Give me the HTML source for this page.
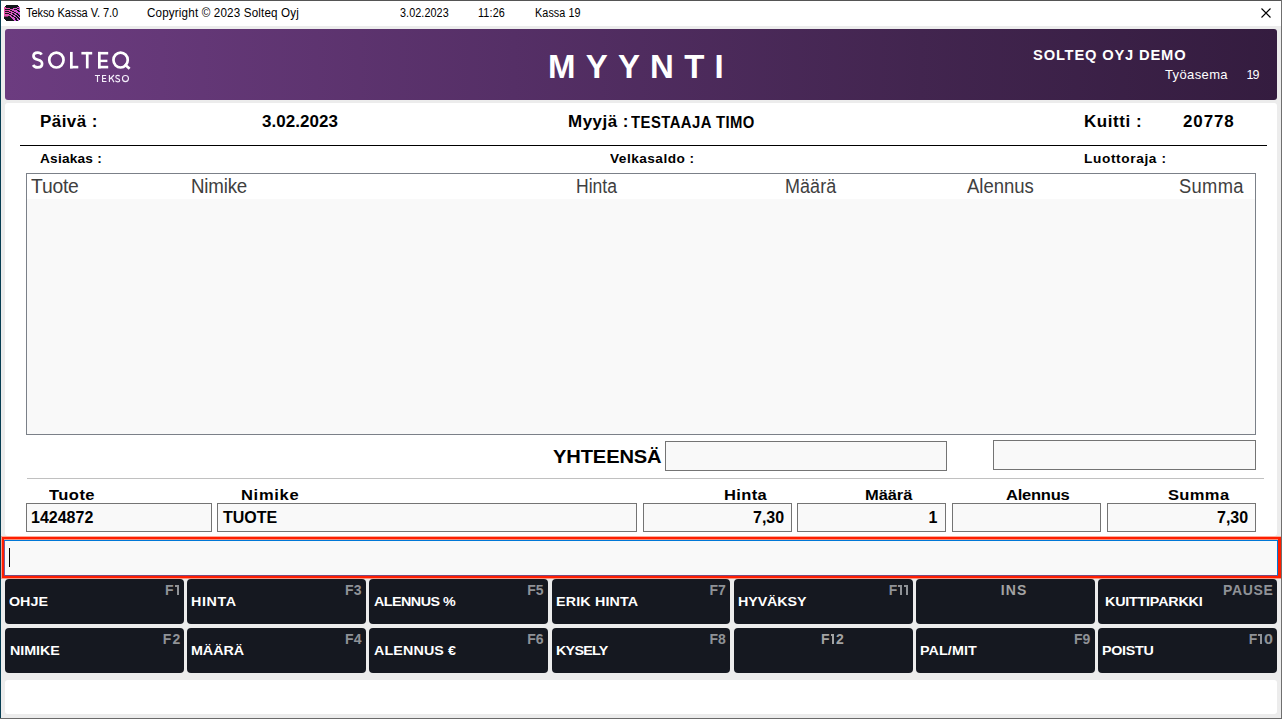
<!DOCTYPE html>
<html><head><meta charset="utf-8">
<style>
html,body{margin:0;padding:0;}
body{width:1282px;height:719px;overflow:hidden;position:relative;background:#ececec;font-family:"Liberation Sans",sans-serif;}
.a{position:absolute;white-space:nowrap;line-height:1;}
.bx{position:absolute;box-sizing:border-box;}
/* window frame */
#tb{left:1px;top:1px;width:1280px;height:25px;background:#fff;}
#bt{left:0;top:0;width:1282px;height:1px;background:#555;}
#bl{left:0;top:0;width:1px;height:719px;background:#073d52;}
#br{left:1281px;top:0;width:1px;height:719px;background:#6f6f6f;}
#bb{left:0;top:718px;width:1282px;height:1px;background:#6a6a6a;}
.tt{font-size:12px;color:#000;top:7px;}
#hdr{left:5px;top:29px;width:1272px;height:71px;border-radius:3px;background:linear-gradient(to right,#6c3c80 0%,#552f66 40%,#42254f 72%,#341c3f 100%);}
#panel{left:5px;top:103px;width:1272px;height:433px;background:#fff;border-radius:3px;}
.lb{font-weight:bold;color:#000;}
#tbl{left:26px;top:173px;width:1230px;height:262px;border:1px solid #7b8088;background:#f9f9f9;}
#tbh{left:27px;top:174px;width:1228px;height:25px;background:#fff;}
.th{font-size:19.5px;color:#404040;top:176.5px;}
.inp{border:1px solid #747474;background:#f9f9f9;}
#cmd{left:1px;top:536px;width:1280px;height:42px;border:3px solid #ff1e00;border-top-width:4px;border-bottom-width:2px;background:#f9f9f9;}
#cmdi{left:4px;top:540px;width:1274px;height:36px;border:1px solid #0078d7;border-left-color:#7a5a9a;border-bottom-color:#7a4a80;}
.btn{position:absolute;background:#151820;border-radius:4px;height:44.6px;}
.bl{position:absolute;font-weight:bold;color:#fff;font-size:13px;line-height:1;white-space:nowrap;}
.sc{position:absolute;font-weight:bold;color:#8f9297;font-size:14px;line-height:1;white-space:nowrap;}
#foot{left:5px;top:680px;width:1272px;height:34px;background:#fff;border-radius:3px;}
</style></head><body>
<div class="bx" id="tb"></div>
<div class="bx" id="bt"></div>
<div class="bx" id="bl"></div>
<div class="bx" id="br"></div>
<div class="bx" id="bb"></div>

<!-- app icon -->
<svg class="a" style="left:4px;top:5px" width="16" height="16" viewBox="0 0 16 16" shape-rendering="crispEdges"><rect x="2" y="0" width="12" height="1" fill="#13151b"/><rect x="1" y="1" width="14" height="1" fill="#13151b"/><rect x="0" y="2" width="1" height="1" fill="#e74e9d"/><rect x="1" y="2" width="1" height="1" fill="#e54fa1"/><rect x="2" y="2" width="11" height="1" fill="#13151b"/><rect x="13" y="2" width="1" height="1" fill="#d759d1"/><rect x="14" y="2" width="1" height="1" fill="#d659d5"/><rect x="15" y="2" width="1" height="1" fill="#d55ad9"/><rect x="0" y="3" width="1" height="1" fill="#e64e9e"/><rect x="1" y="3" width="1" height="1" fill="#e54fa2"/><rect x="2" y="3" width="1" height="1" fill="#e450a6"/><rect x="3" y="3" width="1" height="1" fill="#e251aa"/><rect x="4" y="3" width="1" height="1" fill="#e152ae"/><rect x="5" y="3" width="1" height="1" fill="#e052b2"/><rect x="6" y="3" width="3" height="1" fill="#13151b"/><rect x="9" y="3" width="1" height="1" fill="#db56c2"/><rect x="10" y="3" width="1" height="1" fill="#da56c6"/><rect x="11" y="3" width="1" height="1" fill="#d957ca"/><rect x="12" y="3" width="1" height="1" fill="#d858ce"/><rect x="13" y="3" width="2" height="1" fill="#13151b"/><rect x="15" y="3" width="1" height="1" fill="#d45ada"/><rect x="0" y="4" width="1" height="1" fill="#e64fa0"/><rect x="1" y="4" width="5" height="1" fill="#13151b"/><rect x="6" y="4" width="1" height="1" fill="#de54b8"/><rect x="7" y="4" width="1" height="1" fill="#dd54bc"/><rect x="8" y="4" width="1" height="1" fill="#dc55c0"/><rect x="9" y="4" width="1" height="1" fill="#db56c4"/><rect x="10" y="4" width="3" height="1" fill="#13151b"/><rect x="13" y="4" width="1" height="1" fill="#d659d4"/><rect x="14" y="4" width="1" height="1" fill="#d55ad8"/><rect x="15" y="4" width="1" height="1" fill="#d45bdc"/><rect x="0" y="5" width="1" height="1" fill="#e54fa2"/><rect x="1" y="5" width="1" height="1" fill="#e450a6"/><rect x="2" y="5" width="1" height="1" fill="#e351aa"/><rect x="3" y="5" width="1" height="1" fill="#e252ae"/><rect x="4" y="5" width="1" height="1" fill="#e052b2"/><rect x="5" y="5" width="1" height="1" fill="#df53b6"/><rect x="6" y="5" width="2" height="1" fill="#13151b"/><rect x="8" y="5" width="1" height="1" fill="#dc56c2"/><rect x="9" y="5" width="1" height="1" fill="#da56c6"/><rect x="10" y="5" width="1" height="1" fill="#d957ca"/><rect x="11" y="5" width="1" height="1" fill="#d858ce"/><rect x="12" y="5" width="1" height="1" fill="#d759d2"/><rect x="13" y="5" width="2" height="1" fill="#13151b"/><rect x="15" y="5" width="1" height="1" fill="#d35bde"/><rect x="0" y="6" width="1" height="1" fill="#e54fa3"/><rect x="1" y="6" width="4" height="1" fill="#13151b"/><rect x="5" y="6" width="1" height="1" fill="#df53b7"/><rect x="6" y="6" width="1" height="1" fill="#dd54bb"/><rect x="7" y="6" width="1" height="1" fill="#dc55bf"/><rect x="8" y="6" width="2" height="1" fill="#13151b"/><rect x="10" y="6" width="1" height="1" fill="#d957cb"/><rect x="11" y="6" width="1" height="1" fill="#d758cf"/><rect x="12" y="6" width="1" height="1" fill="#d659d3"/><rect x="13" y="6" width="1" height="1" fill="#d55ad7"/><rect x="14" y="6" width="2" height="1" fill="#13151b"/><rect x="0" y="7" width="1" height="1" fill="#e450a5"/><rect x="1" y="7" width="1" height="1" fill="#e351a9"/><rect x="2" y="7" width="1" height="1" fill="#e251ad"/><rect x="3" y="7" width="1" height="1" fill="#e152b1"/><rect x="4" y="7" width="1" height="1" fill="#df53b5"/><rect x="5" y="7" width="2" height="1" fill="#13151b"/><rect x="7" y="7" width="1" height="1" fill="#dc55c1"/><rect x="8" y="7" width="1" height="1" fill="#db56c5"/><rect x="9" y="7" width="1" height="1" fill="#d957c9"/><rect x="10" y="7" width="2" height="1" fill="#13151b"/><rect x="12" y="7" width="1" height="1" fill="#d659d5"/><rect x="13" y="7" width="1" height="1" fill="#d55ad9"/><rect x="14" y="7" width="1" height="1" fill="#d35bdd"/><rect x="15" y="7" width="1" height="1" fill="#d25ce1"/><rect x="0" y="8" width="1" height="1" fill="#e450a6"/><rect x="1" y="8" width="4" height="1" fill="#13151b"/><rect x="5" y="8" width="1" height="1" fill="#de54ba"/><rect x="6" y="8" width="1" height="1" fill="#dc55be"/><rect x="7" y="8" width="1" height="1" fill="#db56c2"/><rect x="8" y="8" width="2" height="1" fill="#13151b"/><rect x="10" y="8" width="1" height="1" fill="#d858ce"/><rect x="11" y="8" width="1" height="1" fill="#d659d2"/><rect x="12" y="8" width="2" height="1" fill="#13151b"/><rect x="14" y="8" width="1" height="1" fill="#d35bde"/><rect x="15" y="8" width="1" height="1" fill="#d25ce2"/><rect x="0" y="9" width="1" height="1" fill="#e350a8"/><rect x="1" y="9" width="1" height="1" fill="#e251ac"/><rect x="2" y="9" width="1" height="1" fill="#e152b0"/><rect x="3" y="9" width="1" height="1" fill="#e053b4"/><rect x="4" y="9" width="1" height="1" fill="#de54b8"/><rect x="5" y="9" width="2" height="1" fill="#13151b"/><rect x="7" y="9" width="1" height="1" fill="#db56c4"/><rect x="8" y="9" width="1" height="1" fill="#da57c8"/><rect x="9" y="9" width="2" height="1" fill="#13151b"/><rect x="11" y="9" width="1" height="1" fill="#d659d4"/><rect x="12" y="9" width="1" height="1" fill="#d55ad8"/><rect x="13" y="9" width="2" height="1" fill="#13151b"/><rect x="15" y="9" width="1" height="1" fill="#d15ce4"/><rect x="0" y="10" width="1" height="1" fill="#e351aa"/><rect x="1" y="10" width="1" height="1" fill="#e252ae"/><rect x="2" y="10" width="1" height="1" fill="#e052b2"/><rect x="3" y="10" width="1" height="1" fill="#df53b6"/><rect x="4" y="10" width="1" height="1" fill="#de54ba"/><rect x="5" y="10" width="1" height="1" fill="#dd55be"/><rect x="6" y="10" width="1" height="1" fill="#dc56c2"/><rect x="7" y="10" width="2" height="1" fill="#13151b"/><rect x="9" y="10" width="1" height="1" fill="#d858ce"/><rect x="10" y="10" width="1" height="1" fill="#d759d2"/><rect x="11" y="10" width="2" height="1" fill="#13151b"/><rect x="13" y="10" width="1" height="1" fill="#d35bde"/><rect x="14" y="10" width="2" height="1" fill="#13151b"/><rect x="0" y="11" width="4" height="1" fill="#8a3a70"/><rect x="4" y="11" width="2" height="1" fill="#13151b"/><rect x="6" y="11" width="1" height="1" fill="#db56c3"/><rect x="7" y="11" width="1" height="1" fill="#da57c7"/><rect x="8" y="11" width="2" height="1" fill="#13151b"/><rect x="10" y="11" width="1" height="1" fill="#d659d3"/><rect x="11" y="11" width="1" height="1" fill="#d55ad7"/><rect x="12" y="11" width="2" height="1" fill="#13151b"/><rect x="14" y="11" width="1" height="1" fill="#d15ce3"/><rect x="15" y="11" width="1" height="1" fill="#13151b"/><rect x="0" y="12" width="7" height="1" fill="#13151b"/><rect x="7" y="12" width="1" height="1" fill="#d957c9"/><rect x="8" y="12" width="1" height="1" fill="#d858cd"/><rect x="9" y="12" width="1" height="1" fill="#d759d1"/><rect x="10" y="12" width="2" height="1" fill="#13151b"/><rect x="12" y="12" width="1" height="1" fill="#d35bdd"/><rect x="13" y="12" width="2" height="1" fill="#13151b"/><rect x="15" y="12" width="1" height="1" fill="#d05de9"/><rect x="0" y="13" width="8" height="1" fill="#13151b"/><rect x="8" y="13" width="1" height="1" fill="#d858ce"/><rect x="9" y="13" width="1" height="1" fill="#d659d2"/><rect x="10" y="13" width="1" height="1" fill="#d55ad6"/><rect x="11" y="13" width="2" height="1" fill="#13151b"/><rect x="13" y="13" width="1" height="1" fill="#d25ce2"/><rect x="14" y="13" width="2" height="1" fill="#13151b"/><rect x="1" y="14" width="8" height="1" fill="#13151b"/><rect x="9" y="14" width="1" height="1" fill="#d659d4"/><rect x="10" y="14" width="1" height="1" fill="#d55ad8"/><rect x="11" y="14" width="2" height="1" fill="#13151b"/><rect x="13" y="14" width="1" height="1" fill="#d15ce4"/><rect x="14" y="14" width="1" height="1" fill="#d05de8"/><rect x="15" y="14" width="1" height="1" fill="#13151b"/><rect x="2" y="15" width="8" height="1" fill="#13151b"/><rect x="10" y="15" width="1" height="1" fill="#d45ada"/><rect x="11" y="15" width="1" height="1" fill="#d35bde"/><rect x="12" y="15" width="2" height="1" fill="#13151b"/><rect x="14" y="15" width="1" height="1" fill="#d05eea"/></svg>
<div class="a tt" style="left:25.6px;letter-spacing:-0.09px;transform:scaleX(0.92);transform-origin:0 0">Tekso Kassa V. 7.0</div>
<div class="a tt" style="left:147.2px;letter-spacing:0.167px;transform:scaleX(0.97);transform-origin:0 0">Copyright © 2023 Solteq Oyj</div>
<div class="a tt" style="left:399.6px;letter-spacing:0.083px;transform:scaleX(0.9);transform-origin:0 0">3.02.2023</div>
<div class="a tt" style="left:478.4px;letter-spacing:0.167px;transform:scaleX(0.9);transform-origin:0 0">11:26</div>
<div class="a tt" style="left:534.5px;letter-spacing:0.095px;transform:scaleX(0.9);transform-origin:0 0">Kassa 19</div>
<svg class="a" style="left:1260px;top:7px" width="12" height="12" viewBox="0 0 12 12"><path d="M1.5 1.5L10.5 10.5M10.5 1.5L1.5 10.5" stroke="#000" stroke-width="1.1"/></svg>

<div class="bx" id="hdr"></div>
<svg class="a" style="left:0;top:0" width="140" height="90" viewBox="0 0 140 90">
<g fill="none" stroke="#fff" stroke-width="2.7">
<path d="M41.6 54.6 C40.9 53.3 39.5 52.6 37.7 52.6 C35.3 52.6 33.5 53.9 33.5 56 C33.5 58.3 35.5 59.2 37.8 59.8 C40.3 60.4 42.1 61.5 42.1 63.8 C42.1 66.1 40.2 67.4 37.7 67.4 C35.6 67.4 33.9 66.5 33.1 65"/>
<ellipse cx="56.4" cy="60.05" rx="7.15" ry="7.45"/>
<ellipse cx="120.6" cy="60.05" rx="7.15" ry="7.45"/>
<path d="M124.6 64.2 L129.6 68.8"/>
</g>
<g fill="#fff">
<rect x="70" y="51.9" width="2.7" height="16.5"/><rect x="70" y="65.8" width="8.3" height="2.6"/>
<rect x="81.4" y="51.9" width="10.8" height="2.6"/><rect x="85.9" y="51.9" width="2.7" height="16.5"/>
<rect x="98" y="51.9" width="2.7" height="16.5"/><rect x="98" y="51.9" width="10.2" height="2.6"/><rect x="98" y="59.7" width="9.4" height="2.4"/><rect x="98" y="65.8" width="10.2" height="2.6"/>
</g></svg>
<svg class="a" style="left:0;top:0" width="140" height="90" viewBox="0 0 140 90"><g fill="none" stroke="#f4eefa" stroke-width="1.15">
<path d="M94.9 75.5H100M97.5 75.5V82.1"/>
<path d="M106.2 75.5H102.6V81.5H106.5M102.6 78.5H106"/>
<path d="M109.4 75V82.1M114 75L110 79M111.3 77.7L114 82.1"/>
<path d="M119.6 76.3C119.2 75.6 118.5 75.4 117.7 75.4C116.6 75.4 115.8 76 115.8 76.9C115.8 77.9 116.7 78.3 117.7 78.6C118.9 78.9 119.7 79.4 119.7 80.4C119.7 81.3 118.8 81.8 117.7 81.8C116.7 81.8 115.9 81.4 115.4 80.7"/>
<ellipse cx="125.45" cy="78.55" rx="3" ry="3.05"/>
</g></svg>
<div class="a" style="left:548px;top:49.5px;font-size:33px;color:#fff;font-weight:bold;letter-spacing:10.2px">MYYNTI</div>
<div class="a" style="left:1033.2px;top:48px;font-size:14px;color:#fff;font-weight:bold;letter-spacing:0.789px;transform:scaleX(1.05);transform-origin:0 0">SOLTEQ OYJ DEMO</div>
<div class="a" style="left:1165px;top:68px;font-size:13px;color:#fff;letter-spacing:0.37px">Työasema</div>
<div class="a" style="left:1246.5px;top:69px;font-size:12.5px;color:#fff;letter-spacing:-1px">19</div>

<div class="bx" id="panel"></div>
<div class="a lb" style="left:39.9px;top:114px;font-size:16px;letter-spacing:0.44px;transform:scaleX(1.06);transform-origin:0 0">Päivä :</div>
<div class="a lb" style="left:261.7px;top:114px;font-size:16px;letter-spacing:0.071px;transform:scaleX(1.06);transform-origin:0 0">3.02.2023</div>
<div class="a lb" style="left:568.0px;top:114px;font-size:16px;letter-spacing:0.472px;transform:scaleX(1.06);transform-origin:0 0">Myyjä :</div>
<div class="a lb" style="left:631.2px;top:113.5px;font-size:16.5px;letter-spacing:0.5px;transform:scaleX(0.9);transform-origin:0 0">TESTAAJA TIMO</div>
<div class="a lb" style="left:1084.0px;top:114px;font-size:16px;letter-spacing:0.539px;transform:scaleX(1.06);transform-origin:0 0">Kuitti :</div>
<div class="a lb" style="left:1183.4px;top:114px;font-size:16px;letter-spacing:0.849px;transform:scaleX(1.06);transform-origin:0 0">20778</div>
<div class="bx" style="left:20px;top:145px;width:1247px;height:1px;background:#000"></div>
<div class="a lb" style="left:40.0px;top:152px;font-size:13px;letter-spacing:0.214px;transform:scaleX(1.05);transform-origin:0 0">Asiakas :</div>
<div class="a lb" style="left:610.1px;top:152px;font-size:13px;letter-spacing:0.45px;transform:scaleX(1.05);transform-origin:0 0">Velkasaldo :</div>
<div class="a lb" style="left:1083.8px;top:152px;font-size:13px;letter-spacing:0.606px;transform:scaleX(1.05);transform-origin:0 0">Luottoraja :</div>

<div class="bx" id="tbl"></div>
<div class="bx" id="tbh"></div>
<div class="a th" style="left:30.50px;letter-spacing:-0.202px;transform:scaleX(0.99);transform-origin:0 0">Tuote</div>
<div class="a th" style="left:191.10px;letter-spacing:-0.208px;transform:scaleX(0.96);transform-origin:0 0">Nimike</div>
<div class="a th" style="left:576.00px;letter-spacing:0.0px;transform:scaleX(0.9);transform-origin:0 0">Hinta</div>
<div class="a th" style="left:785.20px;letter-spacing:0.109px;transform:scaleX(0.92);transform-origin:0 0">Määrä</div>
<div class="a th" style="left:966.60px;letter-spacing:-0.035px;transform:scaleX(0.95);transform-origin:0 0">Alennus</div>
<div class="a th" style="left:1179.10px;letter-spacing:0.372px;transform:scaleX(0.94);transform-origin:0 0">Summa</div>

<div class="a lb" style="left:553.2px;top:447px;font-size:19px;letter-spacing:-0.135px;transform:scaleX(1.06);transform-origin:0 0">YHTEENSÄ</div>
<div class="bx inp" style="left:665px;top:441px;width:282px;height:30px"></div>
<div class="bx inp" style="left:993px;top:440px;width:263px;height:30px"></div>
<div class="bx" style="left:27px;top:478px;width:1237px;height:1px;background:#c0c0c0"></div>

<div class="a lb" style="left:49.0px;top:488px;font-size:14px;letter-spacing:0.381px;transform:scaleX(1.18);transform-origin:0 0">Tuote</div>
<div class="a lb" style="left:240.8px;top:487.5px;font-size:14px;letter-spacing:0.576px;transform:scaleX(1.18);transform-origin:0 0">Nimike</div>
<div class="a lb" style="left:723.6px;top:487.5px;font-size:14px;letter-spacing:0.297px;transform:scaleX(1.18);transform-origin:0 0">Hinta</div>
<div class="a lb" style="left:865.4px;top:487.5px;font-size:14px;letter-spacing:-0.085px;transform:scaleX(1.18);transform-origin:0 0">Määrä</div>
<div class="a lb" style="left:1005.7px;top:487.5px;font-size:14px;letter-spacing:-0.198px;transform:scaleX(1.18);transform-origin:0 0">Alennus</div>
<div class="a lb" style="left:1168.3px;top:487.5px;font-size:14px;letter-spacing:0.297px;transform:scaleX(1.18);transform-origin:0 0">Summa</div>
<div class="bx inp" style="left:26px;top:503px;width:186px;height:29px"></div>
<div class="bx inp" style="left:217px;top:503px;width:420px;height:29px"></div>
<div class="bx inp" style="left:643px;top:503px;width:149px;height:29px"></div>
<div class="bx inp" style="left:797px;top:503px;width:149px;height:29px"></div>
<div class="bx inp" style="left:952px;top:503px;width:149px;height:29px"></div>
<div class="bx inp" style="left:1107px;top:503px;width:149px;height:29px"></div>
<div class="a lb" style="left:31px;top:510px;font-size:16px">1424872</div>
<div class="a lb" style="left:223px;top:510px;font-size:16px">TUOTE</div>
<div class="a lb" style="left:753px;top:510px;font-size:16px">7,30</div>
<div class="a lb" style="left:928.5px;top:510px;font-size:16px">1</div>
<div class="a lb" style="left:1217px;top:510px;font-size:16px">7,30</div>

<div class="bx" id="cmd"></div>
<div class="bx" id="cmdi"></div><div class="bx" style="left:1px;top:578px;width:1280px;height:1px;background:#f59a88"></div><div class="bx" style="left:2px;top:536px;width:1279px;height:1px;background:#fcae9e"></div><div class="bx" style="left:4px;top:539px;width:1274px;height:1px;background:#f7907c"></div><div class="bx" style="left:1px;top:536px;width:1px;height:43px;background:#f7a090"></div>
<div class="bx" style="left:9px;top:548px;width:1px;height:19px;background:#000"></div>

<!-- buttons -->
<div class="btn" style="left:5.00px;top:579px;width:178.71px"></div>
<div class="btn" style="left:187.21px;top:579px;width:178.71px"></div>
<div class="btn" style="left:369.43px;top:579px;width:178.71px"></div>
<div class="btn" style="left:551.64px;top:579px;width:178.71px"></div>
<div class="btn" style="left:733.86px;top:579px;width:178.71px"></div>
<div class="btn" style="left:916.07px;top:579px;width:178.71px"></div>
<div class="btn" style="left:1098.29px;top:579px;width:178.71px"></div>
<div class="btn" style="left:5.00px;top:628px;width:178.71px"></div>
<div class="btn" style="left:187.21px;top:628px;width:178.71px"></div>
<div class="btn" style="left:369.43px;top:628px;width:178.71px"></div>
<div class="btn" style="left:551.64px;top:628px;width:178.71px"></div>
<div class="btn" style="left:733.86px;top:628px;width:178.71px"></div>
<div class="btn" style="left:916.07px;top:628px;width:178.71px"></div>
<div class="btn" style="left:1098.29px;top:628px;width:178.71px"></div>
<div class="bl" style="left:9.3px;top:594.9px;letter-spacing:0.0px;transform:scaleX(1.1);transform-origin:0 0">OHJE</div>
<div class="sc" style="left:164.9px;top:583.2px;color:#8f9297">F</div><div class="bx" style="left:176.9px;top:585px;width:2.10px;height:10px;background:#8f9297"></div><div class="bx" style="left:175.0px;top:585px;width:1.90px;height:1.9px;background:#8f9297"></div>
<div class="bl" style="left:191.3px;top:594.9px;letter-spacing:0.545px;transform:scaleX(1.1);transform-origin:0 0">HINTA</div>
<div class="sc" style="right:920.57px;top:583.2px;letter-spacing:0px;margin-right:0px">F3</div>
<div class="bl" style="left:374.0px;top:594.9px;letter-spacing:-0.477px;transform:scaleX(1.1);transform-origin:0 0">ALENNUS %</div>
<div class="sc" style="right:738.36px;top:583.2px;letter-spacing:0px;margin-right:0px">F5</div>
<div class="bl" style="left:556.2px;top:594.9px;letter-spacing:0.141px;transform:scaleX(1.1);transform-origin:0 0">ERIK HINTA</div>
<div class="sc" style="right:556.14px;top:583.2px;letter-spacing:0px;margin-right:0px">F7</div>
<div class="bl" style="left:738.2px;top:594.9px;letter-spacing:-0.091px;transform:scaleX(1.1);transform-origin:0 0">HYVÄKSY</div>
<div class="sc" style="left:888.8px;top:583.2px;color:#8f9297">F</div><div class="bx" style="left:899.8px;top:585px;width:2.40px;height:10px;background:#8f9297"></div><div class="bx" style="left:897.9px;top:585px;width:1.90px;height:1.9px;background:#8f9297"></div><div class="bx" style="left:905.6px;top:585px;width:2.50px;height:10px;background:#8f9297"></div><div class="bx" style="left:904.0px;top:585px;width:1.60px;height:1.9px;background:#8f9297"></div>
<div class="sc" style="left:1000.8px;top:583.2px;letter-spacing:1.1px;color:#a3a3a3">INS</div>
<div class="bl" style="left:1104.7px;top:594.9px;letter-spacing:-0.182px;transform:scaleX(1.1);transform-origin:0 0">KUITTIPARKKI</div>
<div class="sc" style="left:1223.1px;top:583.2px;letter-spacing:0.625px;color:#8f9297">PAUSE</div>
<div class="bl" style="left:9.6px;top:644.3px;letter-spacing:-0.036px;transform:scaleX(1.1);transform-origin:0 0">NIMIKE</div>
<div class="sc" style="left:162.7px;top:632.4px;letter-spacing:1.2px;color:#8f9297">F2</div>
<div class="bl" style="left:191.4px;top:644.3px;letter-spacing:-0.045px;transform:scaleX(1.1);transform-origin:0 0">MÄÄRÄ</div>
<div class="sc" style="right:920.57px;top:632.4px;letter-spacing:0px;margin-right:0px">F4</div>
<div class="bl" style="left:374.0px;top:644.3px;letter-spacing:0.114px;transform:scaleX(1.1);transform-origin:0 0">ALENNUS €</div>
<div class="sc" style="right:738.36px;top:632.4px;letter-spacing:0px;margin-right:0px">F6</div>
<div class="bl" style="left:556.2px;top:644.3px;letter-spacing:-0.655px;transform:scaleX(1.1);transform-origin:0 0">KYSELY</div>
<div class="sc" style="right:556.14px;top:632.4px;letter-spacing:0px;margin-right:0px">F8</div>
<div class="sc" style="left:821.0px;top:632.4px;color:#a3a3a3">F</div><div class="sc" style="left:836.0px;top:632.4px;color:#a3a3a3">2</div><div class="bx" style="left:832.0px;top:634px;width:2.30px;height:10px;background:#a3a3a3"></div><div class="bx" style="left:830.8px;top:634px;width:1.20px;height:1.9px;background:#a3a3a3"></div>
<div class="bl" style="left:920.4px;top:644.3px;letter-spacing:0.091px;transform:scaleX(1.1);transform-origin:0 0">PAL/MIT</div>
<div class="sc" style="right:191.71px;top:632.4px;letter-spacing:0px;margin-right:0px">F9</div>
<div class="bl" style="left:1102.4px;top:644.3px;letter-spacing:-0.255px;transform:scaleX(1.1);transform-origin:0 0">POISTU</div>
<div class="sc" style="left:1248.75px;top:632.4px;color:#8f9297">F</div><div class="sc" style="left:1263.6px;top:632.4px;color:#8f9297;transform:scaleX(1.15);transform-origin:0 0">0</div><div class="bx" style="left:1260.1px;top:634px;width:2.40px;height:10px;background:#8f9297"></div><div class="bx" style="left:1257.9px;top:634px;width:2.20px;height:1.9px;background:#8f9297"></div>
<div class="bx" id="foot"></div>
</body></html>
